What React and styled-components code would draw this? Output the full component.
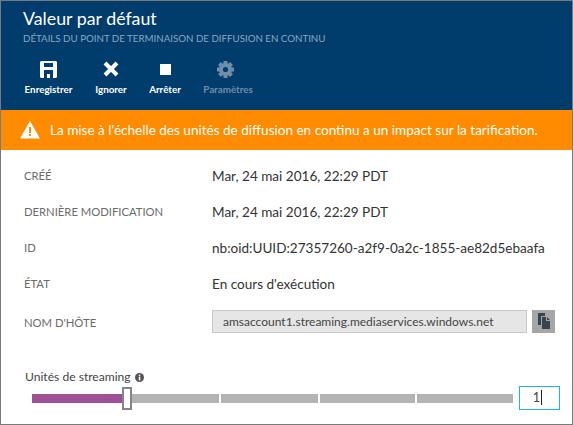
import React from "react";
import styled, { createGlobalStyle } from "styled-components";

const Global = createGlobalStyle`
  html, body { margin: 0; padding: 0; background: #fff; }
  body { font-family: Lato, "Open Sans", sans-serif; }
`;

const Blade = styled.div`
  width: 573px;
  height: 425px;
  box-sizing: border-box;
  border: 1px solid #7a7a7a;
  display: flex;
  flex-direction: column;
  overflow: hidden;
`;

const Header = styled.div`
  height: 109px;
  background: #003c6c;
  padding: 6px 0 0 22px;
  box-sizing: border-box;
  flex: none;
`;

const Title = styled.div`
  font-size: 17.8px;
  line-height: 23px;
  color: #fff;
`;

const Subtitle = styled.div`
  font-size: 9.72px;
  line-height: 14px;
  margin-top: 1px;
  color: #8ba7c0;
  text-transform: uppercase;
`;

const Toolbar = styled.div`
  display: flex;
  margin: 14px 0 0 -22px;
`;

const Tool = styled.div`
  width: ${p => p.$w}px;
  display: flex;
  flex-direction: column;
  align-items: center;
  color: ${p => (p.$off ? "#6f8ea9" : "#fff")};
  font-size: 9.8px;
  font-weight: 700;
`;

const ToolIcon = styled.div`
  height: 20px;
  display: flex;
  align-items: center;
  justify-content: center;
  margin-right: ${p => p.$nudge || 0}px;
`;

const ToolLabel = styled.div`
  line-height: 12px;
  margin-top: 4px;
`;

const Banner = styled.div`
  height: 40px;
  flex: none;
  background: #ff8c00;
  display: flex;
  align-items: center;
  padding-left: 19px;
  gap: 10px;
  color: #fff;
  font-size: 13.55px;
`;

const Rows = styled.div`
  padding: 8px 0 0 23px;
  display: grid;
  grid-template-columns: 188px 1fr;
`;

const Label = styled.div`
  height: 36px;
  line-height: 36px;
  font-size: 11.25px;
  color: #6b6b6b;
  text-transform: uppercase;
  white-space: nowrap;
`;

const HostLabel = styled(Label)`
  height: 38px;
  line-height: 42px;
`;

const Value = styled.div`
  height: 36px;
  line-height: 36px;
  font-size: 13.55px;
  color: #333;
  white-space: nowrap;
`;

const HostRow = styled.div`
  display: flex;
  align-items: center;
  gap: 5px;
  height: 38px;
`;

const HostField = styled.div`
  width: 315px;
  height: 23px;
  box-sizing: border-box;
  border: 1px solid #c8c8c8;
  background: #e6e6e6;
  padding-left: 10px;
  line-height: 21px;
  font-size: 12px;
  color: #444;
`;

const CopyButton = styled.div`
  width: 23px;
  height: 23px;
  background: #a6a6a6;
  display: flex;
  align-items: center;
  justify-content: center;
`;

const Slider = styled.div`
  padding: 29px 0 0 24px;
`;

const SliderLabel = styled.div`
  display: flex;
  align-items: center;
  gap: 4px;
  font-size: 12.1px;
  line-height: 16px;
  color: #444;
`;

const SliderRow = styled.div`
  display: flex;
  align-items: center;
  margin-top: 1px;
  padding-left: 7px;
`;

const Track = styled.div`
  position: relative;
  width: 481px;
  height: 23px;
  display: flex;
  align-items: center;
  gap: 2px;
`;

const Segment = styled.div`
  height: 9px;
  width: ${p => p.$w}px;
  background: ${p => p.$fill || "#b3b3b3"};
`;

const Thumb = styled.div`
  position: absolute;
  left: 90px;
  top: 0;
  width: 10px;
  height: 23px;
  box-sizing: border-box;
  background: #fff;
  border: 2px solid #858585;
`;

const UnitsBox = styled.div`
  width: 41px;
  height: 24px;
  margin-left: 6px;
  box-sizing: border-box;
  border: 1px solid #1eb4ea;
  font-size: 12.6px;
  line-height: 22px;
  color: #444;
  display: flex;
  justify-content: flex-end;
  padding-right: 17px;
`;

const Caret = styled.span`
  width: 1px;
  height: 15px;
  margin: 3px 0 0 1px;
  background: #222;
`;

const SaveIcon = () => (
  <svg width="17" height="17" viewBox="0 0 17 17">
    <path
      fill="#fff"
      fillRule="evenodd"
      d="M0 1 1 0h15l1 1v15l-1 1H13V9H4v8H1l-1-1zM4 2v4h9V2z"
    />
    <rect x="7" y="13" width="3" height="4" fill="#fff" />
  </svg>
);

const CloseIcon = () => (
  <svg width="16" height="16" viewBox="0 0 16 16">
    <path stroke="#fff" strokeWidth="4" d="M2 2l12 12M14 2 2 14" />
  </svg>
);

const StopIcon = () => (
  <svg width="11" height="11" viewBox="0 0 11 11">
    <rect width="11" height="11" fill="#fff" />
  </svg>
);

const GearIcon = () => (
  <svg width="17" height="17" viewBox="0 0 17 17">
    <g fill="#6f8ea9">
      {[0, 45, 90, 135].map(a => (
        <rect key={a} x="6.5" y="0" width="4" height="17" transform={`rotate(${a} 8.5 8.5)`} />
      ))}
    </g>
    <circle cx="8.5" cy="8.5" r="5" fill="none" stroke="#6f8ea9" strokeWidth="3" />
    <circle cx="8.5" cy="8.5" r="2.6" fill="#003c6c" />
  </svg>
);

const WarningIcon = () => (
  <svg width="20" height="18" viewBox="0 0 20 18">
    <path fill="#fff" d="M10 0 20 17.5H0z" />
    <rect x="9" y="6" width="2" height="6" fill="#ff8c00" />
    <rect x="9" y="13" width="2" height="2" fill="#ff8c00" />
  </svg>
);

const CopyIcon = () => (
  <svg width="12" height="16" viewBox="0 0 12 16">
    <path fill="#3a4250" d="M0 0h7v3H3v9H0z" />
    <path fill="#3a4250" d="M4 4h4v4h4v8H4z" />
    <path fill="#3a4250" d="M9 4l3 3H9z" />
  </svg>
);

const InfoIcon = () => (
  <svg width="9" height="9" viewBox="0 0 9 9">
    <circle cx="4.5" cy="4.5" r="4.5" fill="#555" />
    <rect x="3.8" y="1.5" width="1.5" height="1.4" fill="#fff" />
    <rect x="3.8" y="3.6" width="1.5" height="3.8" fill="#fff" />
  </svg>
);

const App = () => (
  <Blade>
    <Global />
    <Header>
      <Title>Valeur par défaut</Title>
      <Subtitle>Détails du point de terminaison de diffusion en continu</Subtitle>
      <Toolbar>
        <Tool $w={95}>
          <ToolIcon><SaveIcon /></ToolIcon>
          <ToolLabel>Enregistrer</ToolLabel>
        </Tool>
        <Tool $w={30}>
          <ToolIcon><CloseIcon /></ToolIcon>
          <ToolLabel>Ignorer</ToolLabel>
        </Tool>
        <Tool $w={78}>
          <ToolIcon><StopIcon /></ToolIcon>
          <ToolLabel>Arrêter</ToolLabel>
        </Tool>
        <Tool $w={48} $off>
          <ToolIcon $nudge={6}><GearIcon /></ToolIcon>
          <ToolLabel>Paramètres</ToolLabel>
        </Tool>
      </Toolbar>
    </Header>
    <Banner>
      <WarningIcon />
      La mise à l'échelle des unités de diffusion en continu a un impact sur la tarification.
    </Banner>
    <Rows>
      <Label>Créé</Label>
      <Value>Mar, 24 mai 2016, 22:29 PDT</Value>
      <Label>Dernière modification</Label>
      <Value>Mar, 24 mai 2016, 22:29 PDT</Value>
      <Label>ID</Label>
      <Value>nb:oid:UUID:27357260-a2f9-0a2c-1855-ae82d5ebaafa</Value>
      <Label>État</Label>
      <Value>En cours d'exécution</Value>
      <HostLabel>Nom d'hôte</HostLabel>
      <HostRow>
        <HostField>amsaccount1.streaming.mediaservices.windows.net</HostField>
        <CopyButton><CopyIcon /></CopyButton>
      </HostRow>
    </Rows>
    <Slider>
      <SliderLabel>Unités de streaming <InfoIcon /></SliderLabel>
      <SliderRow>
        <Track>
          <Segment $w={187} $fill="linear-gradient(to right, #9e4f96 90px, #b3b3b3 90px)" />
          <Segment $w={97} />
          <Segment $w={95} />
          <Segment $w={96} />
          <Thumb />
        </Track>
        <UnitsBox>1<Caret /></UnitsBox>
      </SliderRow>
    </Slider>
  </Blade>
);

export default App;
